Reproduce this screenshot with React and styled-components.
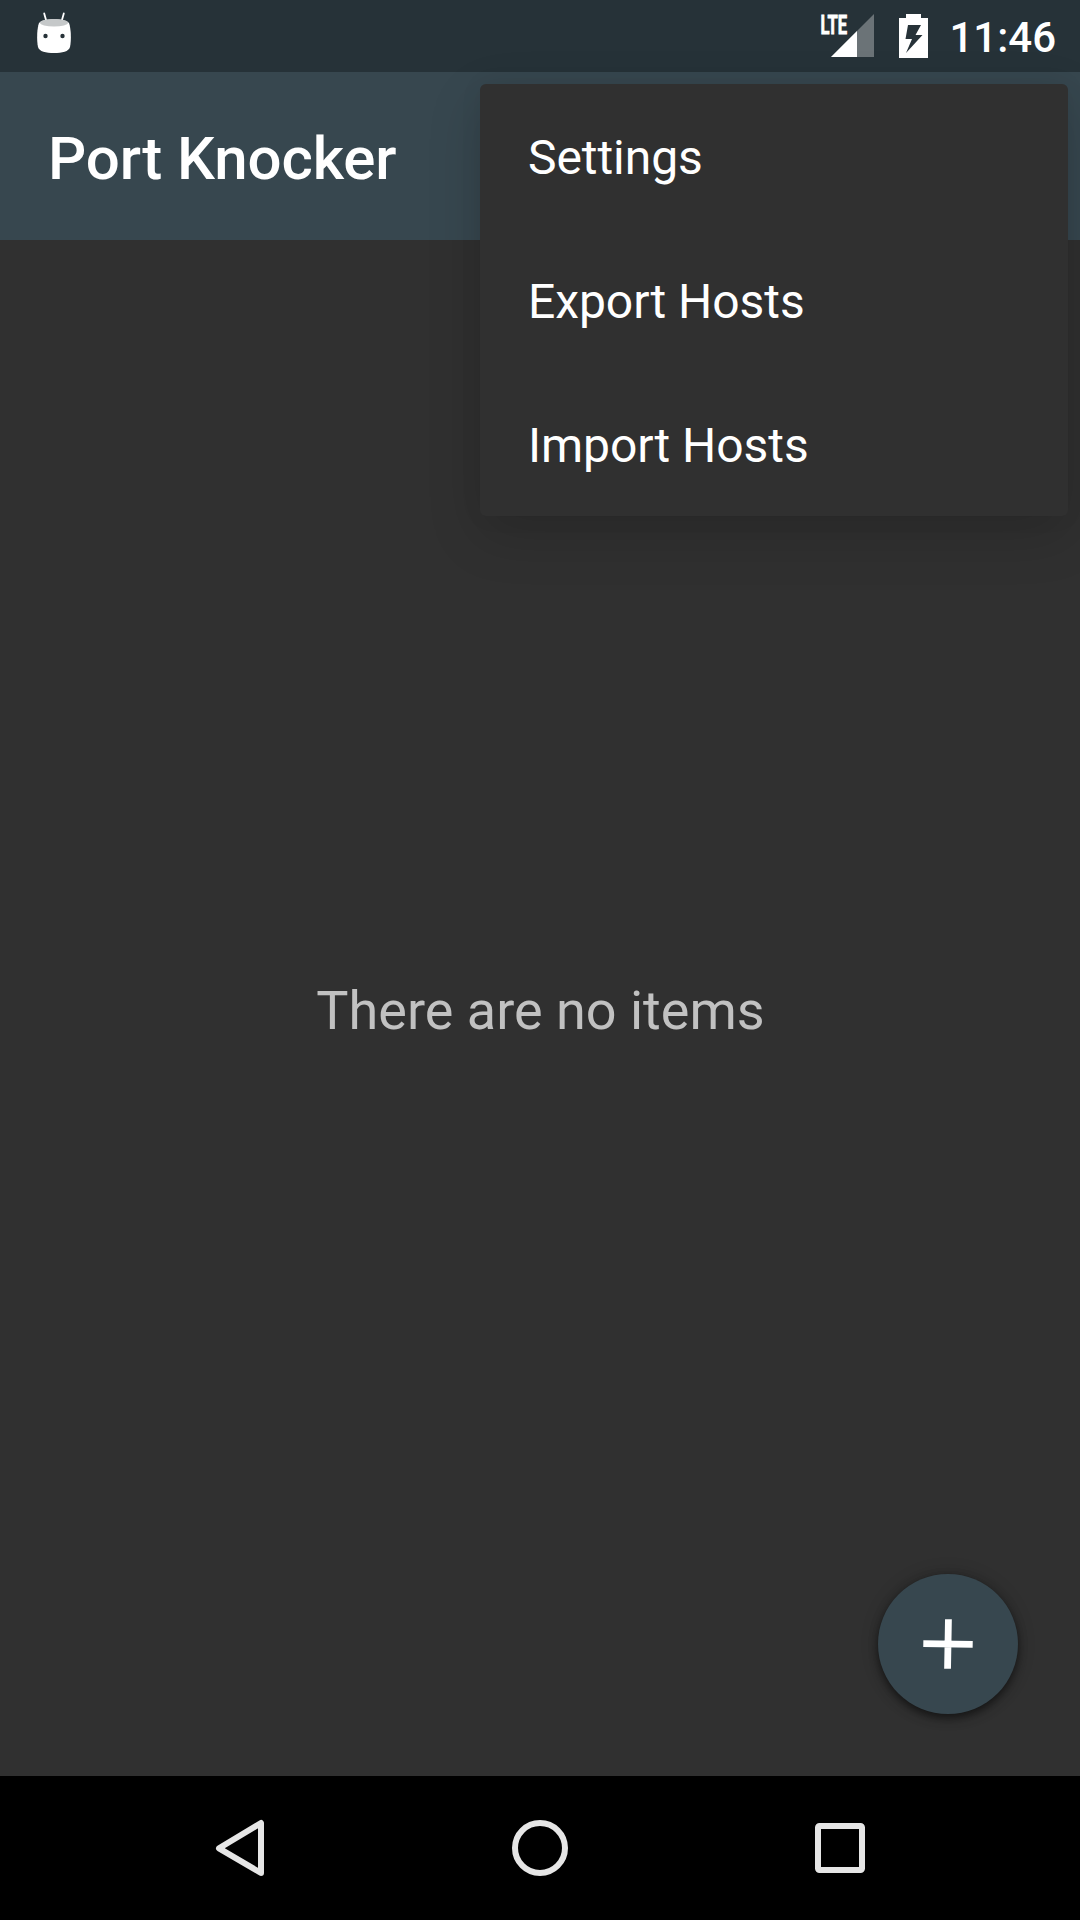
import React from "react";
import styled, { createGlobalStyle } from "styled-components";

const GlobalStyle = createGlobalStyle`
  *, *::before, *::after { box-sizing: border-box; }
  body {
    margin: 0;
    background: #303030;
    font-family: Roboto, "Noto Sans", sans-serif;
    color: #fff;
  }
`;

const Screen = styled.div`
  position: relative;
  display: flex;
  flex-direction: column;
  width: 1080px;
  height: 1920px;
  overflow: hidden;
  background: #303030;
`;

const StatusBar = styled.div`
  display: flex;
  align-items: center;
  height: 72px;
  flex: none;
  padding: 0 24px 0 30px;
  background: #263238;
`;

const StatusIcons = styled.div`
  display: flex;
  align-items: center;
  margin-left: auto;
`;

const Glyph = styled.svg`
  display: block;
  flex: none;
  width: ${(p) => p.$w}px;
  height: ${(p) => p.$h}px;
`;

const Clock = styled.time`
  margin-left: 13px;
  padding-top: 4px;
  font-size: 42px;
  line-height: 72px;
  font-weight: 500;
`;

const AppBar = styled.header`
  display: flex;
  align-items: center;
  height: 168px;
  flex: none;
  padding: 0 48px;
  background: #37474f;
`;

const Title = styled.h1`
  margin: 0;
  padding-top: 6px;
  font-size: 60px;
  line-height: 80px;
  font-weight: 500;
  letter-spacing: -0.12px;
`;

const Content = styled.main`
  display: flex;
  flex: 1;
  align-items: center;
  justify-content: center;
`;

const EmptyText = styled.p`
  margin: 0;
  padding: 6px 0 0 1px;
  font-size: 54px;
  line-height: 64px;
  color: #c1c1c1;
`;

const Menu = styled.ul`
  position: absolute;
  top: 84px;
  right: 12px;
  width: 588px;
  margin: 0;
  padding: 0;
  list-style: none;
  border-radius: 6px;
  background: #303030;
  box-shadow: 0 18px 54px rgba(0, 0, 0, 0.16), 0 0 24px rgba(0, 0, 0, 0.05);
`;

const MenuItem = styled.li`
  display: flex;
  align-items: center;
  height: 144px;
  padding: 2px 48px 0;
  font-size: 48px;
  letter-spacing: -0.06px;
`;

const AddButton = styled.button`
  position: absolute;
  right: 62px;
  bottom: 206px;
  display: flex;
  align-items: center;
  justify-content: center;
  width: 140px;
  height: 140px;
  padding: 0;
  border: 0;
  border-radius: 50%;
  background: #37474f;
  box-shadow: 0 4px 9px rgba(0, 0, 0, 0.5), 0 0 18px rgba(0, 0, 0, 0.2);
`;

const NavBar = styled.nav`
  display: flex;
  justify-content: center;
  height: 144px;
  flex: none;
  background: #000;
`;

const NavButton = styled.button`
  display: flex;
  align-items: center;
  justify-content: center;
  width: 300px;
  padding: 0;
  border: 0;
  background: none;
`;

function AndroidIcon() {
  return (
    <Glyph $w={48} $h={48} viewBox="30 12 48 48">
      <path d="M44.2 13.4 46.6 22M63.8 13.4 61.4 22" stroke="#fff" strokeWidth="1.8" strokeLinecap="round" />
      <path d="M39 23C44 18 64 18 69 23C71 28 71.500 40 70 47C69 51.500 62 53 54 53C46 53 39 51.500 38 47C36.500 40 37 28 39 23Z" fill="#fff" />
      <ellipse cx="54" cy="22.700" rx="14" ry="3.800" fill="#c5c8c9" />
      <circle cx="45.500" cy="36" r="2.200" fill="#263238" />
      <circle cx="62.500" cy="36" r="2.200" fill="#263238" />
    </Glyph>
  );
}

function SignalIcon() {
  return (
    <Glyph $w={64} $h={72} viewBox="816 0 64 72">
      <path d="M874 14V57H831Z" fill="#6b7377" />
      <path d="M857 31V57H831Z" fill="#fff" />
      <text x="0" y="0" transform="translate(820.4 33.8) scale(.64 1)" fontSize="26" fontWeight="700" fill="#fff" stroke="#fff" strokeWidth="0.8">LTE</text>
    </Glyph>
  );
}

function BatteryIcon() {
  return (
    <Glyph $w={56} $h={72} viewBox="880 0 56 72">
      <path fillRule="evenodd" fill="#fff" d="M906 14H921V18H928V58H899V18H906ZM908 25 905.500 39H912L906 53 922.500 35H915.500L921 25Z" />
    </Glyph>
  );
}

export default function App() {
  return (
    <>
      <GlobalStyle />
      <Screen>
        <StatusBar>
          <AndroidIcon />
          <StatusIcons>
            <SignalIcon />
            <BatteryIcon />
            <Clock>11:46</Clock>
          </StatusIcons>
        </StatusBar>
        <AppBar>
          <Title>Port Knocker</Title>
        </AppBar>
        <Content>
          <EmptyText>There are no items</EmptyText>
        </Content>
        <NavBar>
          <NavButton aria-label="Back">
            <Glyph $w={60} $h={60} viewBox="210 1818 60 60">
              <path d="M261 1823V1873L219 1848.300Z" fill="none" stroke="#e6e6e6" strokeWidth="6" strokeLinejoin="round" />
            </Glyph>
          </NavButton>
          <NavButton aria-label="Home">
            <Glyph $w={60} $h={60} viewBox="0 0 60 60">
              <circle cx="30" cy="30" r="25" fill="none" stroke="#e6e6e6" strokeWidth="6" />
            </Glyph>
          </NavButton>
          <NavButton aria-label="Overview">
            <Glyph $w={60} $h={60} viewBox="810 1818 60 60">
              <rect x="818" y="1826" width="44" height="44" rx="1.500" fill="none" stroke="#e6e6e6" strokeWidth="6" />
            </Glyph>
          </NavButton>
        </NavBar>
        <AddButton aria-label="Add host">
          <Glyph $w={60} $h={60} viewBox="-30 -30 60 60">
            <path d="M-24.700 0H24.700M0-24.700V24.700" transform="rotate(1)" stroke="#fff" strokeWidth="6.800" />
          </Glyph>
        </AddButton>
        <Menu>
          <MenuItem>Settings</MenuItem>
          <MenuItem>Export Hosts</MenuItem>
          <MenuItem>Import Hosts</MenuItem>
        </Menu>
      </Screen>
    </>
  );
}
